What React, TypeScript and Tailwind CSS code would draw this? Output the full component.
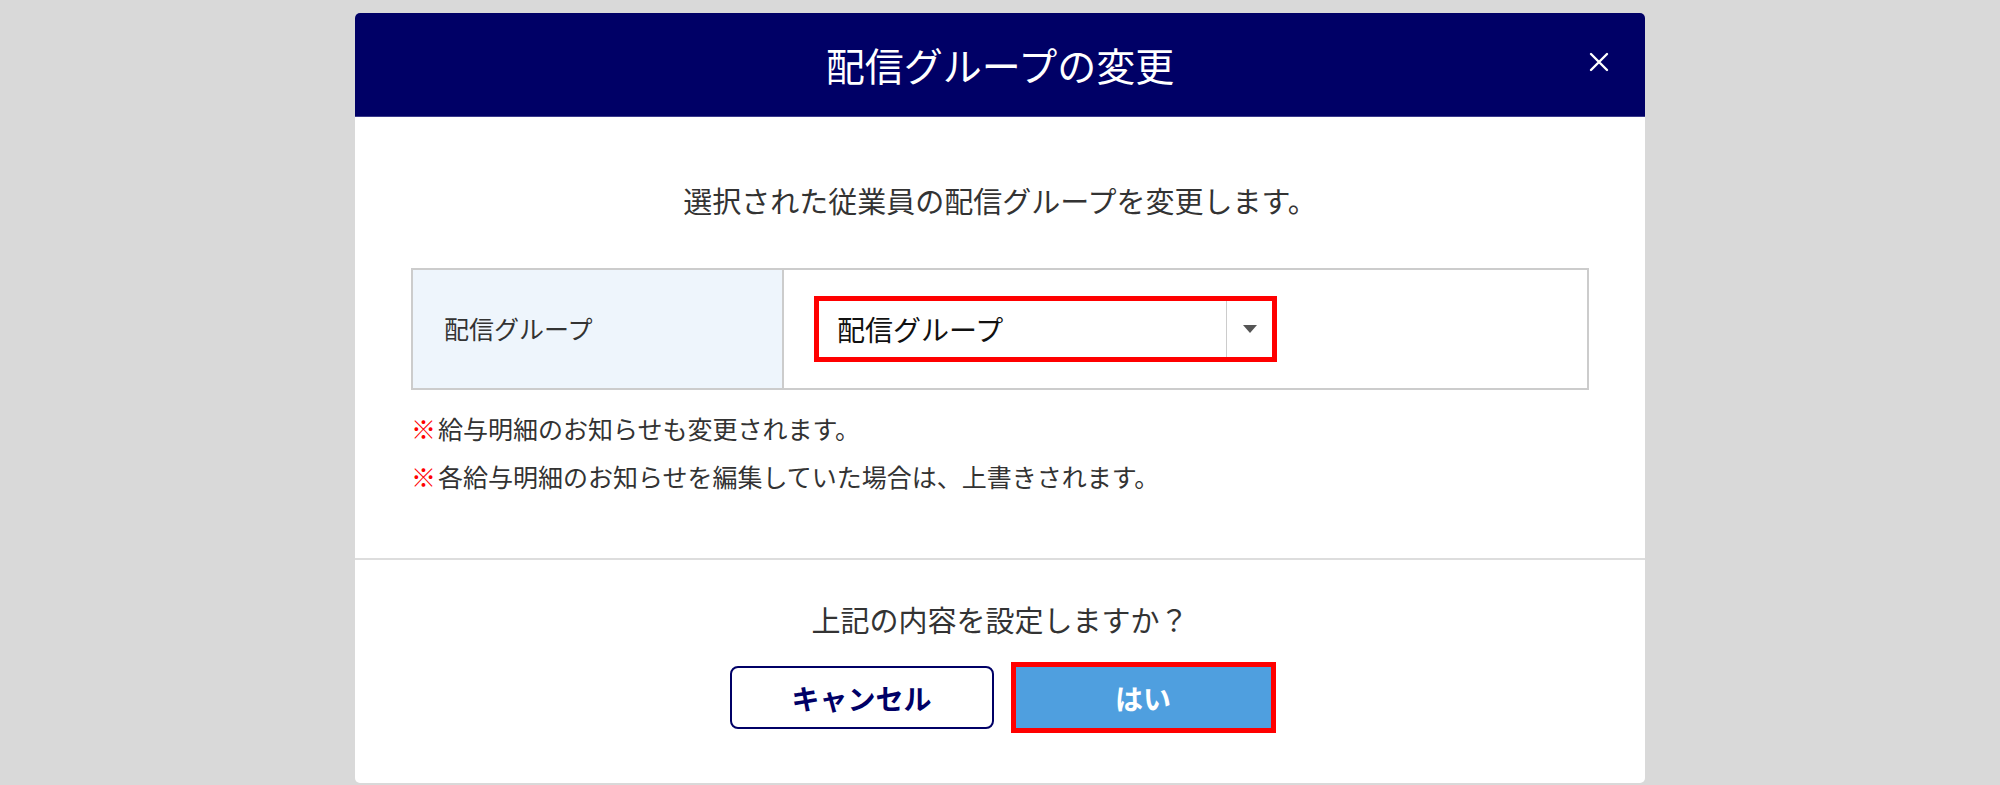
const font = { fontFamily: '"Noto Sans CJK JP", "Noto Sans", sans-serif' };

export default function App() {
	return (
		<div className="h-[785px] w-full bg-[#d9d9d9] pt-[13px] overflow-hidden" style={font}>
			<div className="mx-auto w-[1290px] h-[770px] bg-white rounded-[5px] overflow-hidden flex flex-col">
				<div className="relative h-[104px] bg-[#000066] border-b border-[#3a3a8a] flex items-center justify-center">
					<h1 className="text-[39px] text-white leading-none">配信グループの変更</h1>
					<button className="absolute right-[35px] top-[38px] w-[22px] h-[22px]">
						<svg viewBox="0 0 22 22" className="w-[22px] h-[22px]">
							<path d="M3 3 L19 19 M19 3 L3 19" stroke="white" strokeWidth="2.4" strokeLinecap="round" />
						</svg>
					</button>
				</div>

				<div className="px-[56px] pt-[63px] pb-[58px] border-b-2 border-[#dddddd]">
					<p className="text-center text-[29px] leading-[40px] text-[#333333]">
						選択された従業員の配信グループを変更します。
					</p>
					<div className="mt-[48px] flex h-[122px] border-2 border-[#cccccc]">
						<div className="w-[371px] bg-[#eef5fc] border-r-2 border-[#cccccc] flex items-center pl-[31px]">
							<span className="text-[25px] text-[#333333]">配信グループ</span>
						</div>
						<div className="flex-1 flex items-center pl-[30px]">
							<div className="w-[463px] h-[66px] border-[5px] border-[#ff0000] bg-white flex items-center">
								<span className="flex-1 pl-[18px] text-[28px] text-[#111111]">配信グループ</span>
								<div className="w-[46px] h-full border-l border-[#cccccc] flex items-center justify-center">
									<svg viewBox="0 0 14 8" className="w-[14px] h-[8px]">
										<path d="M0 0 L14 0 L7 8 Z" fill="#555555" />
									</svg>
								</div>
							</div>
						</div>
					</div>
					<div className="mt-[14px] text-[25px] leading-[48px] text-[#333333]">
						<p>
							<span className="text-[#ff0000] mr-[2px]">※</span>給与明細のお知らせも変更されます。
						</p>
						<p>
							<span className="text-[#ff0000] mr-[2px]">※</span>各給与明細のお知らせを編集していた場合は、上書きされます。
						</p>
					</div>
				</div>

				<div className="pt-[39px] flex flex-col items-center">
					<p className="text-[29px] leading-[40px] text-[#333333]">上記の内容を設定しますか？</p>
					<div className="mt-[27px] flex items-center gap-[22px]">
						<button className="w-[264px] h-[63px] rounded-[8px] border-2 border-[#000066] bg-white text-[28px] font-bold text-[#000066]">
							キャンセル
						</button>
						<button className="w-[255px] h-[61px] bg-[#4f9fdf] outline-[5px] outline-solid outline-[#ff0000] text-[28px] font-bold text-white">
							はい
						</button>
					</div>
				</div>
			</div>
		</div>
	);
}
